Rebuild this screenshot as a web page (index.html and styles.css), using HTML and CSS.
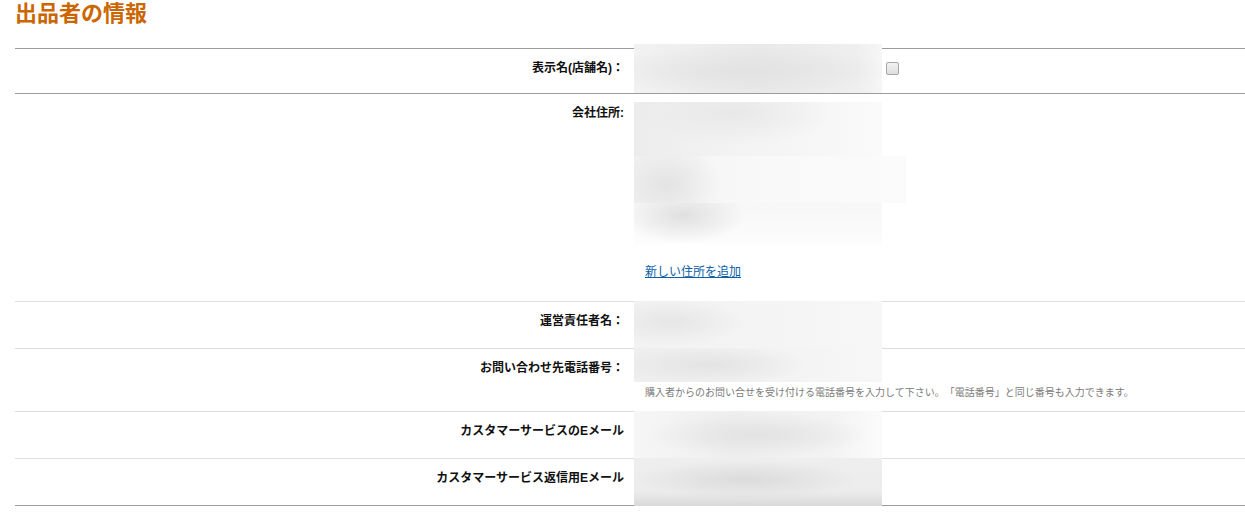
FILE: index.html
```html
<!DOCTYPE html>
<html lang="ja">
<head>
<meta charset="utf-8">
<title>出品者の情報</title>
<link rel="stylesheet" href="styles.css">
</head>
<body>
<div class="page">
  <h1 class="title">出品者の情報</h1>
  <div class="form">
    <div class="row row-first">
      <div class="label">表示名(店舗名)：</div>
      <div class="value value-inline">
        <div class="blur blur-a"></div>
        <input type="checkbox" class="check">
      </div>
    </div>
    <div class="row row-address">
      <div class="label">会社住所:</div>
      <div class="value">
        <div class="addr">
          <div class="blur addr-top"></div>
          <div class="blur addr-mid"></div>
          <div class="blur addr-bot"></div>
        </div>
        <a class="link" href="#">新しい住所を追加</a>
      </div>
    </div>
    <div class="row row-std">
      <div class="label">運営責任者名：</div>
      <div class="value">
        <div class="blur blur-b full"></div>
      </div>
    </div>
    <div class="row row-phone">
      <div class="label">お問い合わせ先電話番号：</div>
      <div class="value">
        <div class="blur blur-c phone"></div>
        <p class="hint">購入者からのお問い合せを受け付ける電話番号を入力して下さい。「電話番号」と同じ番号も入力できます。</p>
      </div>
    </div>
    <div class="row row-std">
      <div class="label">カスタマーサービスのEメール</div>
      <div class="value">
        <div class="blur blur-d full"></div>
      </div>
    </div>
    <div class="row row-std row-last">
      <div class="label">カスタマーサービス返信用Eメール</div>
      <div class="value">
        <div class="blur blur-e full"></div>
      </div>
    </div>
  </div>
</div>
</body>
</html>
```

FILE: styles.css
```css
* { box-sizing: border-box; }

html, body {
  margin: 0;
  padding: 0;
  background: #fff;
}

body {
  font-family: "Liberation Sans", "Noto Sans CJK JP", sans-serif;
  font-size: 12px;
  color: #111;
  text-spacing-trim: space-all;
}

.page {
  padding-left: 15px;
  padding-top: 1px;
}

.title {
  margin: 0 0 21px 0;
  font-size: 22px;
  line-height: 26px;
  font-weight: bold;
  color: #cc6600;
}

.form {
  border-top: 1px solid #9c9c9c;
}

.row {
  display: flex;
  border-bottom: 1px solid #dddddd;
}

.row-first {
  height: 45px;
  border-bottom-color: #9c9c9c;
}

.row-address { height: 208px; }
.row-std { height: 47px; }
.row-phone { height: 63px; }
.row-last { border-bottom-color: #9c9c9c; }

.label {
  width: 619px;
  flex: none;
  padding: 10px 10px 0 0;
  text-align: right;
  font-weight: bold;
  line-height: 18px;
  font-size: 12px;
}

.value {
  display: flex;
  flex-direction: column;
  align-items: flex-start;
}

.value-inline {
  flex-direction: row;
}

.blur {
  width: 248px;
  background: linear-gradient(90deg, #f1f1f1 0%, #e7e7e7 35%, #e9e9e9 70%, #f5f5f5 100%);
}

.blur-a {
  height: 49px;
  margin-top: -5px;
  background:
    radial-gradient(ellipse 60% 50% at 45% 55%, #e2e2e2 0%, rgba(226,226,226,0) 100%),
    linear-gradient(90deg, #f2f2f2 0%, #e9e9e9 50%, #efefef 90%, #f6f6f6 100%);
}

.check {
  appearance: none;
  -webkit-appearance: none;
  width: 13px;
  height: 13px;
  margin: 13px 0 0 4px;
  border: 1px solid #a6a6a6;
  border-radius: 2px;
  background: linear-gradient(180deg, #f2f2f2 0%, #dedede 100%);
}

.addr {
  margin-top: 8px;
  display: flex;
  flex-direction: column;
}

.addr-top {
  height: 54px;
  background:
    radial-gradient(ellipse 40% 60% at 40% 20%, #e8e8e8 0%, rgba(232,232,232,0) 100%),
    linear-gradient(90deg, #ececec 0%, #f3f3f3 40%, #f6f6f6 70%, #fafafa 100%);
}

.addr-mid {
  width: 272px;
  height: 47px;
  background:
    radial-gradient(ellipse 20% 90% at 12% 60%, #e3e3e3 0%, rgba(227,227,227,0) 100%),
    linear-gradient(90deg, #f2f2f2 0%, #f8f8f8 40%, #fbfbfb 100%);
}

.addr-bot {
  height: 41px;
  background:
    radial-gradient(ellipse 25% 70% at 20% 30%, #e0e0e0 0%, rgba(224,224,224,0) 100%),
    linear-gradient(180deg, #f7f7f7 0%, #fbfbfb 70%, #fdfdfd 100%);
}

.link {
  margin: 19px 0 0 11px;
  line-height: 18px;
  font-size: 12px;
  color: #0a5ea8;
  text-decoration: underline;
}

.full {
  height: 49px;
  margin-top: -1px;
  margin-bottom: -1px;
}

.blur-b {
  height: 47px;
  margin-bottom: 0;
  background:
    radial-gradient(ellipse 30% 50% at 15% 45%, #e6e6e6 0%, rgba(230,230,230,0) 100%),
    linear-gradient(90deg, #f2f2f2 0%, #f4f4f4 50%, #f7f7f7 100%);
}

.phone {
  height: 34px;
  margin-top: -1px;
  background:
    radial-gradient(ellipse 40% 60% at 30% 50%, #e3e3e3 0%, rgba(227,227,227,0) 100%),
    linear-gradient(90deg, #efefef 0%, #f3f3f3 60%, #f7f7f7 100%);
}

.hint {
  margin: 4px 0 0 11px;
  font-size: 10px;
  line-height: 14px;
  color: #7a7a7a;
  white-space: nowrap;
}

.blur-d {
  background:
    radial-gradient(ellipse 45% 45% at 50% 50%, #e2e2e2 0%, rgba(226,226,226,0) 100%),
    linear-gradient(90deg, #f6f6f6 0%, #eeeeee 40%, #f3f3f3 80%, #fbfbfb 100%);
}

.blur-e {
  background:
    radial-gradient(ellipse 45% 40% at 45% 45%, #dbdbdb 0%, rgba(219,219,219,0) 100%),
    linear-gradient(180deg, #eeeeee 0%, #ececec 70%, #d9d9d9 100%);
}
```
